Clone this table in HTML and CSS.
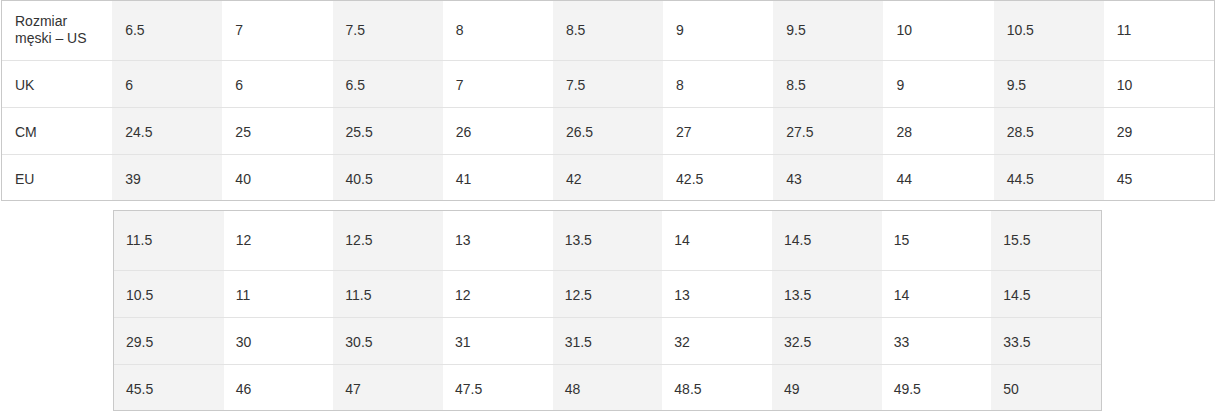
FILE: index.html
```html
<!DOCTYPE html>
<html lang="pl">
<head>
<meta charset="utf-8">
<title>Tabela rozmiarów</title>
<link rel="stylesheet" href="styles.css">
</head>
<body>
<div class="page">
  <div class="chart chart--main">
    <div class="cell label">Rozmiar<br>męski – US</div>
    <div class="cell alt">6.5</div><div class="cell">7</div><div class="cell alt">7.5</div><div class="cell">8</div><div class="cell alt">8.5</div><div class="cell">9</div><div class="cell alt">9.5</div><div class="cell">10</div><div class="cell alt">10.5</div><div class="cell">11</div>

    <div class="cell sep">UK</div>
    <div class="cell sep alt">6</div><div class="cell sep">6</div><div class="cell sep alt">6.5</div><div class="cell sep">7</div><div class="cell sep alt">7.5</div><div class="cell sep">8</div><div class="cell sep alt">8.5</div><div class="cell sep">9</div><div class="cell sep alt">9.5</div><div class="cell sep">10</div>

    <div class="cell sep">CM</div>
    <div class="cell sep alt">24.5</div><div class="cell sep">25</div><div class="cell sep alt">25.5</div><div class="cell sep">26</div><div class="cell sep alt">26.5</div><div class="cell sep">27</div><div class="cell sep alt">27.5</div><div class="cell sep">28</div><div class="cell sep alt">28.5</div><div class="cell sep">29</div>

    <div class="cell sep">EU</div>
    <div class="cell sep alt">39</div><div class="cell sep">40</div><div class="cell sep alt">40.5</div><div class="cell sep">41</div><div class="cell sep alt">42</div><div class="cell sep">42.5</div><div class="cell sep alt">43</div><div class="cell sep">44</div><div class="cell sep alt">44.5</div><div class="cell sep">45</div>
  </div>

  <div class="chart chart--more">
    <div class="cell alt">11.5</div><div class="cell">12</div><div class="cell alt">12.5</div><div class="cell">13</div><div class="cell alt">13.5</div><div class="cell">14</div><div class="cell alt">14.5</div><div class="cell">15</div><div class="cell alt">15.5</div>

    <div class="cell sep alt">10.5</div><div class="cell sep">11</div><div class="cell sep alt">11.5</div><div class="cell sep">12</div><div class="cell sep alt">12.5</div><div class="cell sep">13</div><div class="cell sep alt">13.5</div><div class="cell sep">14</div><div class="cell sep alt">14.5</div>

    <div class="cell sep alt">29.5</div><div class="cell sep">30</div><div class="cell sep alt">30.5</div><div class="cell sep">31</div><div class="cell sep alt">31.5</div><div class="cell sep">32</div><div class="cell sep alt">32.5</div><div class="cell sep">33</div><div class="cell sep alt">33.5</div>

    <div class="cell sep alt">45.5</div><div class="cell sep">46</div><div class="cell sep alt">47</div><div class="cell sep">47.5</div><div class="cell sep alt">48</div><div class="cell sep">48.5</div><div class="cell sep alt">49</div><div class="cell sep">49.5</div><div class="cell sep alt">50</div>
  </div>
</div>
</body>
</html>
```

FILE: styles.css
```css
html, body {
  margin: 0;
  padding: 0;
  background: #ffffff;
}

.page {
  font-family: "Liberation Sans", Arial, sans-serif;
  font-size: 14px;
  line-height: 17px;
  color: #333333;
  padding-left: 1px;
}

.chart {
  display: grid;
  grid-template-rows: 59px 47px 47px 46px;
  border: 1px solid #c9c9c9;
  box-sizing: border-box;
}

.chart--main {
  width: 1214px;
  grid-template-columns: repeat(11, 1fr);
}

.chart--more {
  width: 989px;
  margin-left: 112px;
  margin-top: 9px;
  grid-template-columns: repeat(9, 1fr);
}

.cell {
  display: flex;
  align-items: center;
  padding: 0 8px 0 13px;
  box-sizing: border-box;
  background: #ffffff;
}

.cell.label {
  padding-bottom: 2px;
}

.cell.sep {
  border-top: 1px solid #e3e3e3;
  padding-top: 3px;
}

.cell.alt {
  background: #f3f3f3;
}

.chart--more .cell {
  padding-left: 12px;
}
```
